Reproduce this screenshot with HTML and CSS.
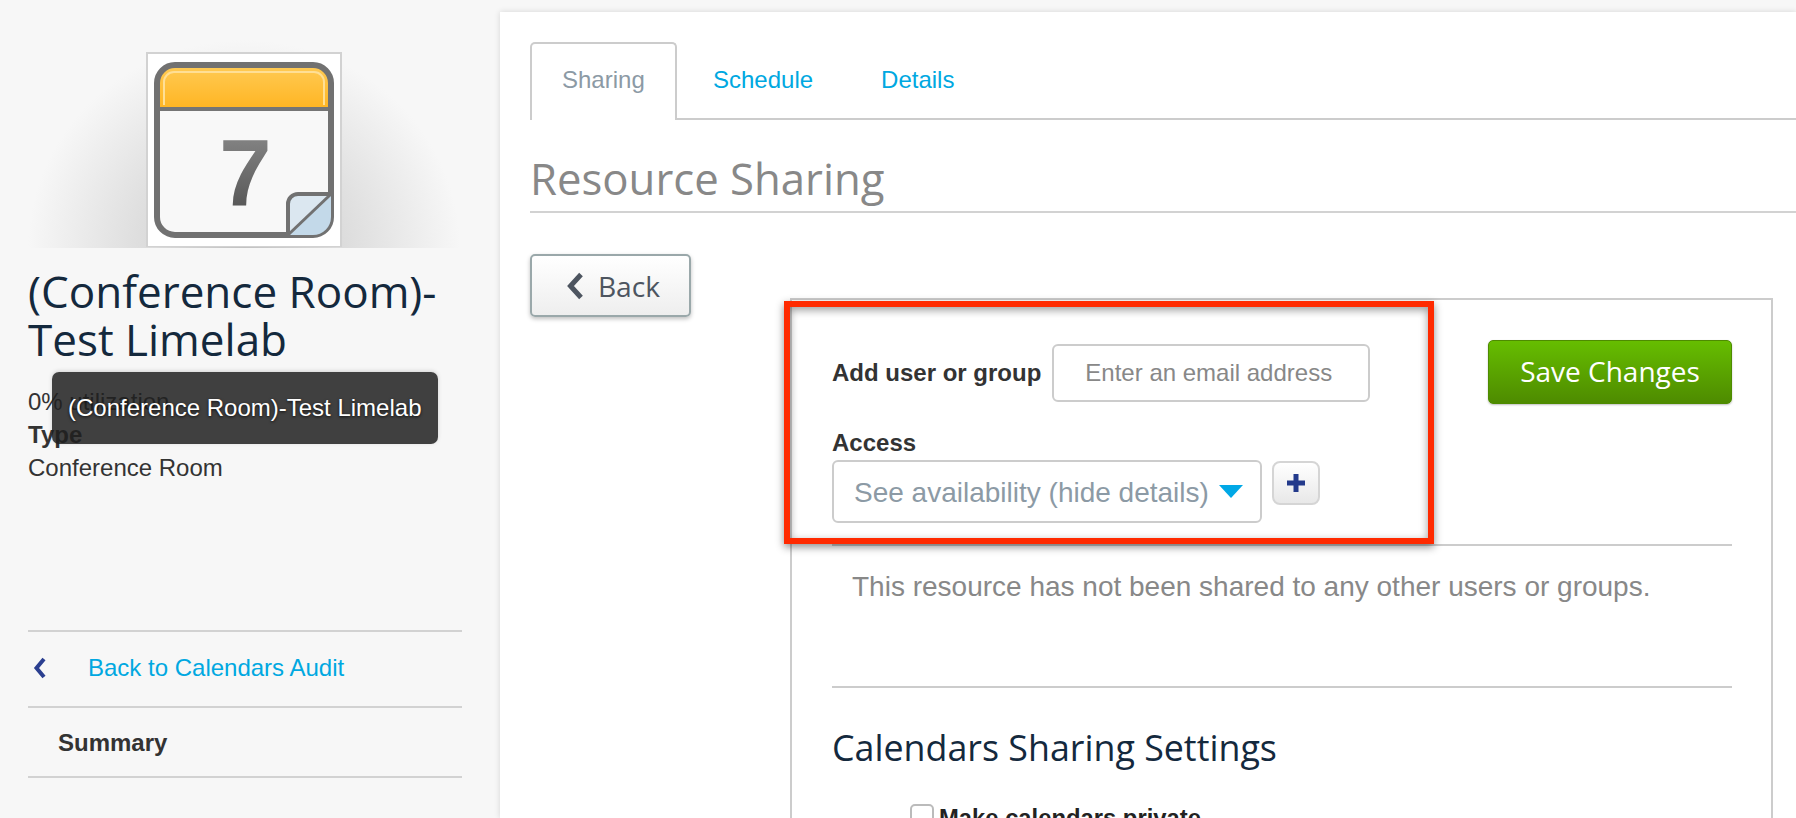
FILE: index.html
```html
<!DOCTYPE html>
<html lang="en">
<head>
    <meta charset="UTF-8">
    <meta name="viewport" content="width=device-width, initial-scale=1.0">
    <title>Resource Sharing</title>
    <link rel="stylesheet" href="styles.css">
</head>
<body>
    <div class="layout">
        <aside class="sidebar">
            <div class="avatar-stage">
                <div class="avatar">
                    <svg width="192" height="192" viewBox="0 0 192 192">
                        <defs>
                            <linearGradient id="header-fill" x1="0" y1="0" x2="0" y2="1">
                                <stop offset="0" stop-color="#ffcb55"/>
                                <stop offset="1" stop-color="#ffb522"/>
                            </linearGradient>
                            <linearGradient id="seven-fill" x1="0" y1="0" x2="0" y2="1">
                                <stop offset="0.2" stop-color="#808080"/>
                                <stop offset="0.85" stop-color="#565656"/>
                            </linearGradient>
                        </defs>
                        <rect x="9" y="11" width="174" height="170" rx="18" fill="#f8f8f8"/>
                        <path d="M9 55V29a18 18 0 0 1 18-18h138a18 18 0 0 1 18 18v26z" fill="url(#header-fill)"/>
                        <path d="M16 51V28a10 10 0 0 1 10-10h140a10 10 0 0 1 10 10v23" fill="none" stroke="#ffdf95" stroke-width="2"/>
                        <path d="M9 55h174" stroke="#757575" stroke-width="4"/>
                        <rect x="9" y="11" width="174" height="170" rx="18" fill="none" stroke="#717171" stroke-width="6"/>
                        <text class="avatar-day" x="97.500" y="152" text-anchor="middle" fill="url(#seven-fill)">7</text>
                        <path d="M140 181v-31a10 10 0 0 1 10-10h33v23a18 18 0 0 1-18 18z" fill="#c3d9e9"/>
                        <path d="M142 178v-28a8 8 0 0 1 8-8h29z" fill="#dbe7f0"/>
                        <path d="M140 181v-31a10 10 0 0 1 10-10h33" fill="none" stroke="#717171" stroke-width="4"/>
                        <path d="M141 180l41-39" stroke="#717171" stroke-width="3"/>
                    </svg>
                </div>
            </div>
            <h1 class="resource-name">(Conference Room)-Test Limelab</h1>
            <div class="stats">
                <div>0% utilization</div>
                <div class="stat-label">Type</div>
                <div>Conference Room</div>
            </div>
            <div class="tooltip">(Conference Room)-Test Limelab</div>
            <nav class="side-nav">
                <a class="side-link" href="#">
                    <svg class="side-chevron" width="14" height="22" viewBox="0 0 14 22">
                        <path d="M11 2L3.500 11l7.500 9" fill="none" stroke="#2b3f90" stroke-width="4"/>
                    </svg>
                    Back to Calendars Audit
                </a>
                <div class="side-item">Summary</div>
            </nav>
        </aside>

        <main class="content">
            <div class="tabs">
                <a class="tab active" href="#">Sharing</a>
                <a class="tab" href="#">Schedule</a>
                <a class="tab" href="#">Details</a>
            </div>
            <h2 class="page-title">Resource Sharing</h2>
            <div class="sharing-row">
                <button class="back-btn">
                    <svg width="18" height="28" viewBox="0 0 18 28">
                        <path d="M15 2.500L4.500 14 15 25.500" fill="none" stroke="#4d5560" stroke-width="5"/>
                    </svg>
                    Back
                </button>
                <section class="panel">
                    <div class="share-form">
                        <div>
                            <div class="field-inline">
                                <label class="field-label">Add user or group</label>
                                <input class="text-input" type="text" placeholder="Enter an email address">
                            </div>
                            <label class="field-label access-label">Access</label>
                            <div class="access-row">
                                <div class="select-box">
                                    See availability (hide details)
                                    <span class="caret"></span>
                                </div>
                                <button class="plus-btn">
                                    <svg width="18" height="18" viewBox="0 0 18 18">
                                        <path d="M6.500 0h5v6.500H18v5h-6.500V18h-5v-6.500H0v-5h6.500z" fill="#233a8b"/>
                                    </svg>
                                </button>
                            </div>
                        </div>
                        <button class="save-btn">Save Changes</button>
                    </div>
                    <p class="empty-note">This resource has not been shared to any other users or groups.</p>
                    <h3 class="settings-title">Calendars Sharing Settings</h3>
                    <label class="check-row">
                        <span class="check-box"></span>
                        Make calendars private
                    </label>
                    <div class="callout"></div>
                </section>
            </div>
        </main>
    </div>
</body>
</html>
```

FILE: styles.css
```css
* { box-sizing: border-box; }
html, body { height: 100%; }
body { margin: 0; height: 818px; overflow: hidden; background: #f7f7f7; font-family: "Liberation Sans", Arial, sans-serif; color: #333; }
.layout { display: flex; height: 818px; overflow: hidden; }

/* sidebar */
.sidebar { position: relative; width: 500px; flex: none; padding-left: 28px; }
.avatar-stage { width: 432px; height: 248px; padding-top: 52px; background: radial-gradient(ellipse 216px 208px at 50% 100%, #c2c2c2 0, #dcdcdc 45%, #f7f7f7 100%); }
.avatar { width: 196px; height: 195px; margin-left: 118px; background: #fff; border: 2px solid #d2d2d2; border-bottom-width: 1px; }
.avatar svg { display: block; filter: blur(0.5px); }
.avatar-day { font-family: "Liberation Sans", Arial, sans-serif; font-weight: bold; font-size: 94px; }
.resource-name { width: 420px; margin: 18.500px 0 0; font-family: "Open Sans", sans-serif; font-weight: 400; font-size: 44px; line-height: 48px; color: #14293d; }
.stats { margin-top: 22.500px; font-size: 24px; line-height: 33px; color: #333; }
.stat-label { font-weight: bold; }
.tooltip { position: absolute; left: 52px; top: 372px; width: 386px; height: 72px; padding-left: 16px; background: rgba(32, 32, 32, 0.85); border-radius: 7px; color: #fff; font-size: 24px; line-height: 72px; text-shadow: 0 1px 3px rgba(0, 0, 0, 0.8); box-shadow: 0 -1px 4px rgba(0, 0, 0, 0.15); white-space: nowrap; }
.side-nav { width: 434px; margin-top: 146px; border-top: 2px solid #d2d2d2; }
.side-link { display: flex; align-items: center; height: 76px; padding-bottom: 2px; border-bottom: 2px solid #d2d2d2; color: #00a8e1; font-size: 24px; text-decoration: none; }
.side-chevron { margin: 0 41px 0 5px; }
.side-item { height: 70px; padding-left: 30px; line-height: 70px; border-bottom: 2px solid #d2d2d2; font-size: 24px; font-weight: bold; }

/* main column */
.content { flex: 1; min-width: 0; margin-top: 12px; padding: 30px 0 0 30px; background: #fff; box-shadow: 0 0 6px rgba(0, 0, 0, 0.14); }
.tabs { display: flex; height: 78px; border-bottom: 2px solid #ccc; }
.tab { height: 78px; padding: 0 34px; line-height: 75px; color: #00a8e1; font-size: 24px; text-decoration: none; }
.tab.active { width: 147px; padding: 0 30px; margin-right: 2px; background: #fff; color: #8c9aa5; border: 2px solid #ccc; border-bottom: 0; border-radius: 5px 5px 0 0; line-height: 71px; }
.page-title { height: 93px; margin: 0; border-bottom: 2px solid #d2d2d2; font-family: "Open Sans", sans-serif; font-weight: 400; font-size: 43.700px; line-height: 116px; color: #888; }
.sharing-row { display: flex; align-items: flex-start; padding-top: 41px; }
.back-btn { display: flex; align-items: center; justify-content: center; gap: 14px; width: 161px; height: 63px; padding: 0 0 0 5px; background: linear-gradient(#fff, #eee); border: 2px solid #9aa8aa; border-radius: 5px; box-shadow: 0 2px 4px rgba(0, 0, 0, 0.25); font-family: "Open Sans", sans-serif; font-size: 28.200px; color: #4d5560; }

/* sharing panel */
.panel { position: relative; width: 983px; height: 600px; margin: 44px 0 0 99px; padding: 44px 39px 0 40px; border: 2px solid #ccc; border-bottom: 0; }
.share-form { display: flex; justify-content: space-between; height: 202px; border-bottom: 2px solid #ccc; }
.field-inline { display: flex; align-items: center; gap: 11px; }
.field-label { font-size: 24px; font-weight: bold; color: #333; }
.text-input { width: 318px; height: 58px; padding: 0 31px; border: 2px solid #ccc; border-radius: 6px; font-family: "Liberation Sans", Arial, sans-serif; font-size: 24px; outline: none; }
.text-input::placeholder { color: #888; opacity: 1; }
.access-label { display: block; margin-top: 24px; line-height: 34px; }
.access-row { display: flex; align-items: flex-start; gap: 10px; }
.select-box { display: flex; align-items: center; width: 430px; height: 63px; padding: 2px 0 0 20px; border: 2px solid #ccc; border-radius: 6px; color: #8c9aa5; font-size: 28px; white-space: nowrap; }
.caret { margin-left: 10px; margin-top: -2px; border-style: solid; border-width: 13px 12px 0; border-color: #00a8e6 transparent transparent; }
.plus-btn { display: flex; align-items: center; justify-content: center; width: 48px; height: 44px; margin-top: 1px; padding: 0; background: linear-gradient(#fff, #e8e8e8); border: 2px solid #d5d5d5; border-radius: 8px; }
.save-btn { width: 244px; height: 64px; margin-top: -4px; padding: 0 0 2px; background: linear-gradient(#66bd00, #4e8b00); border: 1px solid #4e8b00; border-radius: 5px; box-shadow: 0 1px 2px rgba(0, 0, 0, 0.25); font-family: "Open Sans", sans-serif; font-size: 28px; color: #fff; }
.empty-note { height: 142px; margin: 0; padding: 24px 0 0 20px; border-bottom: 2px solid #ccc; color: #888; font-size: 28px; line-height: 34px; }
.settings-title { margin: 36px 0 0; font-family: "Open Sans", sans-serif; font-weight: 400; font-size: 35.800px; line-height: 46px; color: #14293d; }
.check-row { display: flex; align-items: flex-start; gap: 5px; margin: 34px 0 0 78px; font-size: 23.800px; line-height: 28px; font-weight: bold; color: #222; }
.check-box { width: 24px; height: 24px; background: #fff; border: 2px solid #bbb; border-radius: 5px; }

/* annotation drawn on top of the form */
.callout { position: absolute; left: -8px; top: 1px; width: 650px; height: 243px; border: 6px solid #ff2a00; box-shadow: 0 3px 8px rgba(0, 0, 0, 0.45), inset 0 3px 8px rgba(0, 0, 0, 0.4); pointer-events: none; }
```
